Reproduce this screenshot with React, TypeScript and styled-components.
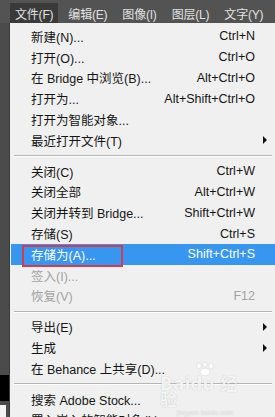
import styled, { createGlobalStyle } from "styled-components";

type Item =
  | { kind: "sep" }
  | {
      kind: "item";
      label: string;
      shortcut?: string;
      sub?: boolean;
      disabled?: boolean;
      active?: boolean;
    };

const items: Item[] = [
  { kind: "item", label: "新建(N)...", shortcut: "Ctrl+N" },
  { kind: "item", label: "打开(O)...", shortcut: "Ctrl+O" },
  { kind: "item", label: "在 Bridge 中浏览(B)...", shortcut: "Alt+Ctrl+O" },
  { kind: "item", label: "打开为...", shortcut: "Alt+Shift+Ctrl+O" },
  { kind: "item", label: "打开为智能对象..." },
  { kind: "item", label: "最近打开文件(T)", sub: true },
  { kind: "sep" },
  { kind: "item", label: "关闭(C)", shortcut: "Ctrl+W" },
  { kind: "item", label: "关闭全部", shortcut: "Alt+Ctrl+W" },
  { kind: "item", label: "关闭并转到 Bridge...", shortcut: "Shift+Ctrl+W" },
  { kind: "item", label: "存储(S)", shortcut: "Ctrl+S" },
  { kind: "item", label: "存储为(A)...", shortcut: "Shift+Ctrl+S", active: true },
  { kind: "item", label: "签入(I)...", disabled: true },
  { kind: "item", label: "恢复(V)", shortcut: "F12", disabled: true },
  { kind: "sep" },
  { kind: "item", label: "导出(E)", sub: true },
  { kind: "item", label: "生成", sub: true },
  { kind: "item", label: "在 Behance 上共享(D)..." },
  { kind: "sep" },
  { kind: "item", label: "搜索 Adobe Stock..." },
  { kind: "item", label: "置入嵌入的智能对象(L)..." },
];

const menus = ["文件(F)", "编辑(E)", "图像(I)", "图层(L)", "文字(Y)"];

// faint "Baidu 经验" paw mark that sits on top of the screenshot
const Paw = () => (
  <svg width="40" height="14" viewBox="0 0 40 14">
    <g fill="rgba(255,255,255,0.85)" stroke="rgba(0,0,0,0.12)" strokeWidth="0.6">
      <ellipse cx="14" cy="4" rx="2.2" ry="3" />
      <ellipse cx="20" cy="2.6" rx="2.2" ry="2.6" />
      <ellipse cx="26" cy="4" rx="2.2" ry="3" />
      <ellipse cx="20" cy="10" rx="5" ry="3.8" />
    </g>
  </svg>
);

const App = () => {
  return (
    <>
      <GlobalStyle />
      <Screen>
        <MenuBar>
          {menus.map((m, i) => (
            <MenuTitle key={m} $open={i === 0}>
              {m}
            </MenuTitle>
          ))}
        </MenuBar>
        <Body>
          <ToolStrip>
            <Swatch $color="#000" />
            <Swatch $color="#f4f4f4" $small />
          </ToolStrip>
          <Menu>
            {items.map((it, i) =>
              it.kind === "sep" ? (
                <Separator key={i} />
              ) : (
                <Row key={i} $active={it.active} $disabled={it.disabled}>
                  <Label>
                    {it.active ? <Marked>{it.label}</Marked> : it.label}
                  </Label>
                  <Shortcut>{it.shortcut}</Shortcut>
                  <Arrow>{it.sub ? <Triangle /> : null}</Arrow>
                </Row>
              )
            )}
            <Watermark>
              <Paw />
              <WatermarkTitle>Baidu 经验</WatermarkTitle>
              <WatermarkUrl>jingyan.baidu.com</WatermarkUrl>
            </Watermark>
          </Menu>
        </Body>
      </Screen>
    </>
  );
};

export default App;

const GlobalStyle = createGlobalStyle`
  html, body {
    margin: 0;
    padding: 0;
    background: #535353;
  }
  * {
    box-sizing: border-box;
  }
`;

const Screen = styled.div`
  width: 275px;
  height: 417px;
  overflow: hidden;
  display: flex;
  flex-direction: column;
  font-family: "Liberation Sans", "Noto Sans CJK SC", sans-serif;
  font-size: 12.5px;
`;

const MenuBar = styled.div`
  height: 23px;
  flex: none;
  display: flex;
  align-items: stretch;
  padding: 3px 0 0 10px;
  background: #535353;
  gap: 5px;
  white-space: nowrap;
`;

const MenuTitle = styled.div<{ $open?: boolean }>`
  display: flex;
  align-items: center;
  padding: 0 5px;
  color: #e2e2e2;
  font-size: 12px;
  letter-spacing: -0.2px;
  background: ${(p) => (p.$open ? "#3a3a3a" : "transparent")};
`;

const Body = styled.div`
  flex: 1;
  display: flex;
  min-height: 0;
`;

const ToolStrip = styled.div`
  width: 10px;
  flex: none;
  display: flex;
  flex-direction: column;
  justify-content: flex-end;
  background: #4b4b4b;
  border-right: 1px solid #3a3a3a;
`;

const Swatch = styled.div<{ $color: string; $small?: boolean }>`
  width: ${(p) => (p.$small ? "6px" : "9px")};
  height: ${(p) => (p.$small ? "12px" : "26px")};
  margin-bottom: ${(p) => (p.$small ? "0" : "4px")};
  background: ${(p) => p.$color};
`;

const Menu = styled.div`
  position: relative;
  flex: 1;
  padding: 3px 0 0 1px;
  background: #f0f0f0;
  display: flex;
  flex-direction: column;
`;

const Row = styled.div<{ $active?: boolean; $disabled?: boolean }>`
  height: 20.8px;
  flex: none;
  display: grid;
  grid-template-columns: 1fr auto 20px;
  align-items: center;
  padding-left: 20px;
  background: ${(p) => (p.$active ? "#3797f0" : "transparent")};
  color: ${(p) =>
    p.$active ? "#ffffff" : p.$disabled ? "#a3a3a3" : "#151515"};
  white-space: nowrap;
`;

const Label = styled.span`
  position: relative;
`;

const Marked = styled.span`
  position: relative;
  &::after {
    content: "";
    position: absolute;
    left: -9px;
    right: -27px;
    top: -4px;
    bottom: -4px;
    border: 2px solid #d63a4e;
  }
`;

const Shortcut = styled.span`
  text-align: right;
`;

const Arrow = styled.span`
  display: flex;
  justify-content: center;
`;

const Triangle = styled.span`
  width: 0;
  height: 0;
  border-top: 4px solid transparent;
  border-bottom: 4px solid transparent;
  border-left: 4px solid #111;
`;

const Separator = styled.div`
  height: 10px;
  flex: none;
  margin: 0 3px;
  display: flex;
  align-items: center;
  &::before {
    content: "";
    flex: 1;
    height: 1px;
    background: #b5b5b5;
    box-shadow: 0 1px 0 #ffffff;
  }
`;

const Watermark = styled.div`
  position: absolute;
  left: 150px;
  top: 339px;
  width: 90px;
  display: flex;
  flex-direction: column;
  align-items: center;
  pointer-events: none;
  color: rgba(255, 255, 255, 0.85);
  text-shadow: 0 0 1px rgba(0, 0, 0, 0.25);
`;

const WatermarkTitle = styled.div`
  font-family: "DejaVu Sans", "Noto Sans CJK SC", sans-serif;
  font-size: 17px;
  font-weight: bold;
  line-height: 16px;
`;

const WatermarkUrl = styled.div`
  font-size: 7px;
  line-height: 9px;
  color: rgba(255, 255, 255, 0.75);
`;
